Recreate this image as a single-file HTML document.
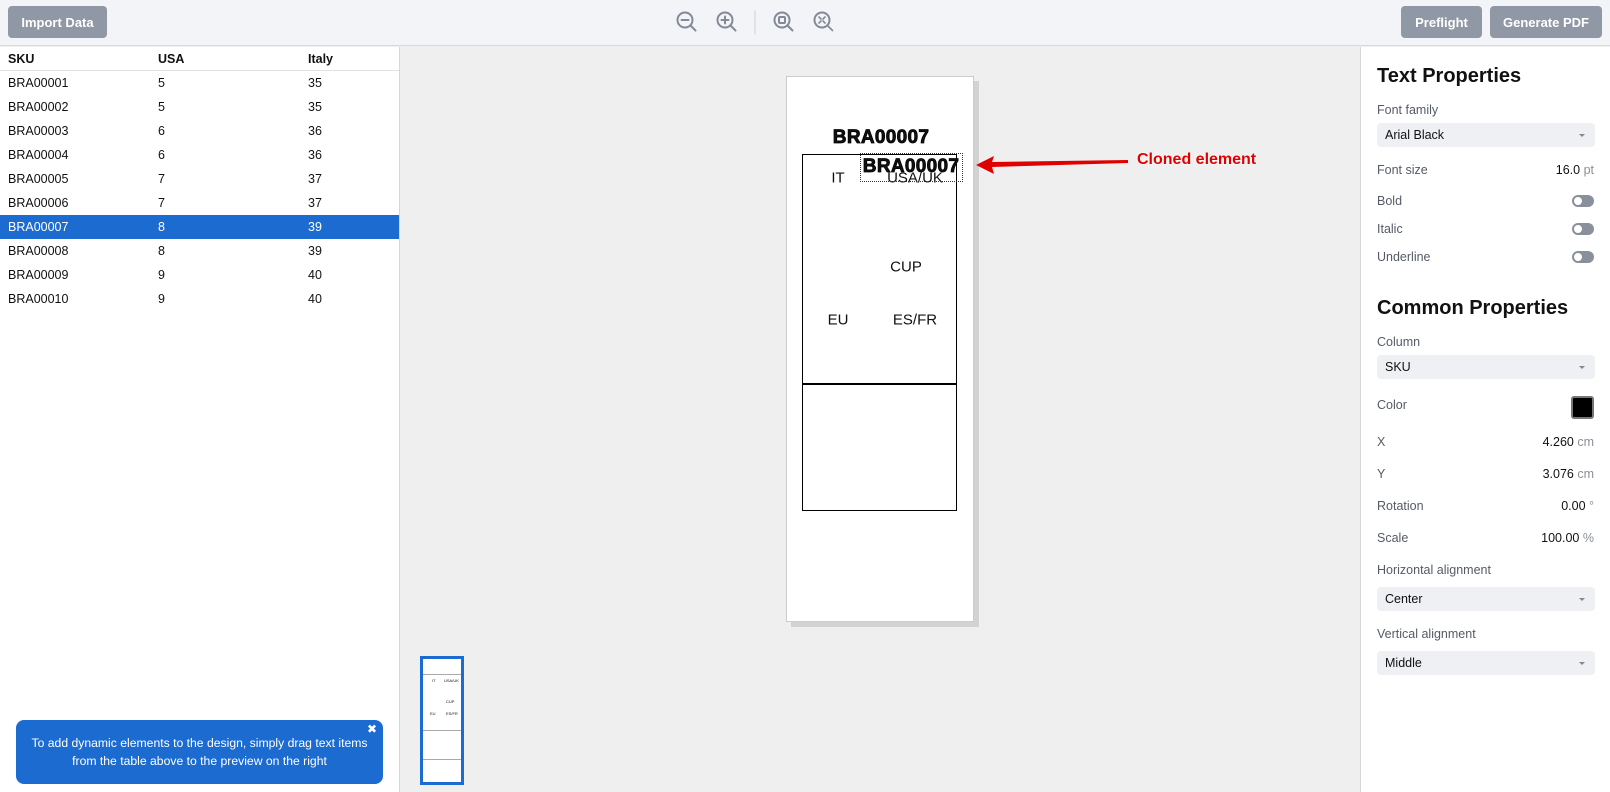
<!DOCTYPE html>
<html><head><meta charset="utf-8"><style>
*{box-sizing:border-box;margin:0;padding:0}
body{width:1610px;height:792px;overflow:hidden;font-family:"Liberation Sans",Arial,sans-serif;background:#efefef;position:relative;color:#111}
.abs{position:absolute}
.top{left:0;top:0;width:1610px;height:46px;background:#f3f4f7;border-bottom:1px solid #d8d9dc}
.btn{position:absolute;top:6px;height:32px;background:#9097a5;color:#fff;font-weight:bold;font-size:13px;border-radius:4px;display:flex;align-items:center;justify-content:center}
.left{left:0;top:47px;width:400px;height:745px;background:#fff;border-right:1px solid #d6d6d6}
.row{position:absolute;left:0;width:399px;height:24px;font-size:12.5px;line-height:24px}
.row span{position:absolute}
.right{left:1360px;top:47px;width:250px;height:745px;background:#fff;border-left:1px solid #d6d6d6}
.h{position:absolute;left:16px;font-size:20px;font-weight:bold;color:#111}
.lbl{position:absolute;left:16px;font-size:12.5px;color:#555b66}
.val{position:absolute;right:16px;font-size:12.5px;color:#111}
.val i{font-style:normal;color:#8a8f99}
.sel{position:absolute;left:16px;width:218px;height:24px;background:#eff0f3;border-radius:4px;font-size:12.5px;line-height:24px;padding-left:8px}
.sel:after{content:"";position:absolute;right:10px;top:11px;border:3px solid transparent;border-top:3px solid #888}
.tog{position:absolute;right:16px;width:22px;height:12px;border-radius:6px;background:#8a8f9c}
.tog:after{content:"";position:absolute;left:2px;top:2px;width:8px;height:8px;border-radius:50%;background:#fff}
.t{position:absolute;font-size:15px;transform:translate(-50%,-50%);white-space:nowrap}
.ab{font-weight:bold;font-size:19px;-webkit-text-stroke:0.8px #000;letter-spacing:0.3px}
</style></head><body>
<div class="abs top">
<div class="btn" style="left:8px;width:99px">Import Data</div>
<div class="btn" style="left:1401px;width:81px">Preflight</div>
<div class="btn" style="left:1490px;width:112px">Generate PDF</div>
<svg class="abs" style="left:672px;top:8px" width="170" height="28" fill="none" stroke="#838997" stroke-width="2" stroke-linecap="round">
<circle cx="13" cy="12" r="7.5"/><path d="M18.5 17.5l5 5M9.5 12h7"/>
<circle cx="53" cy="12" r="7.5"/><path d="M58.5 17.5l5 5M49.5 12h7M53 8.5v7"/>
<path d="M83 3v23" stroke="#cfd1d6" stroke-width="1"/>
<circle cx="110" cy="12" r="7.5"/><path d="M115.5 17.5l5 5"/><rect x="107" y="9" width="6" height="6" rx="1"/>
<circle cx="150" cy="12" r="7.5"/><path d="M155.5 17.5l5 5M147 9l2 2M153 9l-2 2M147 15l2-2M153 15l-2-2" stroke-width="1.6"/>
</svg>
</div>
<div class="abs left">
<div class="row" style="top:0;font-weight:bold;border-bottom:1px solid #e2e2e2"><span style="left:8px">SKU</span><span style="left:158px">USA</span><span style="left:308px">Italy</span></div>
<div class="row" style="top:24px"><span style="left:8px">BRA00001</span><span style="left:158px">5</span><span style="left:308px">35</span></div>
<div class="row" style="top:48px"><span style="left:8px">BRA00002</span><span style="left:158px">5</span><span style="left:308px">35</span></div>
<div class="row" style="top:72px"><span style="left:8px">BRA00003</span><span style="left:158px">6</span><span style="left:308px">36</span></div>
<div class="row" style="top:96px"><span style="left:8px">BRA00004</span><span style="left:158px">6</span><span style="left:308px">36</span></div>
<div class="row" style="top:120px"><span style="left:8px">BRA00005</span><span style="left:158px">7</span><span style="left:308px">37</span></div>
<div class="row" style="top:144px"><span style="left:8px">BRA00006</span><span style="left:158px">7</span><span style="left:308px">37</span></div>
<div class="row" style="top:168px;background:#1b6bd0;color:#fff"><span style="left:8px">BRA00007</span><span style="left:158px">8</span><span style="left:308px">39</span></div>
<div class="row" style="top:192px"><span style="left:8px">BRA00008</span><span style="left:158px">8</span><span style="left:308px">39</span></div>
<div class="row" style="top:216px"><span style="left:8px">BRA00009</span><span style="left:158px">9</span><span style="left:308px">40</span></div>
<div class="row" style="top:240px"><span style="left:8px">BRA00010</span><span style="left:158px">9</span><span style="left:308px">40</span></div>
<div class="abs" style="left:16px;top:673px;width:367px;height:64px;background:#1b6bd0;border-radius:8px;color:#fff;font-size:12.2px;text-align:center;line-height:18px;padding-top:14px">To add dynamic elements to the design, simply drag text items<br>from the table above to the preview on the right<span class="abs" style="right:6px;top:2px;font-size:12px;line-height:14px">✖</span></div>
</div>
<!-- page -->
<div class="abs" style="left:791px;top:81px;width:188px;height:546px;background:#d2d2d2"></div>
<div class="abs" style="left:786px;top:76px;width:188px;height:546px;background:#fff;border:1px solid #ccc"></div>
<div class="abs" style="left:802px;top:154px;width:155px;height:357px;border:1.5px solid #000"></div>
<div class="abs" style="left:802px;top:383px;width:155px;height:1.5px;background:#000"></div>
<div class="t ab" style="left:881px;top:138px">BRA00007</div>
<div class="t" style="left:838px;top:178px">IT</div>
<div class="t" style="left:915px;top:178px">USA/UK</div>
<div class="abs" style="left:860px;top:153px;width:103px;height:29px;border:1px dotted #333"></div>
<div class="t ab" style="left:911px;top:167px">BRA00007</div>
<div class="t" style="left:906px;top:267px">CUP</div>
<div class="t" style="left:838px;top:320px">EU</div>
<div class="t" style="left:915px;top:320px">ES/FR</div>
<svg class="abs" style="left:970px;top:150px" width="170" height="25"><path d="M6 15 L24 6 L22 12 L158 10 L158 13 L22 17 L24 24 Z" fill="#e00000"/></svg>
<div class="abs" style="left:1137px;top:151px;color:#e00000;font-weight:bold;font-size:16px;text-shadow:0 0 2px #fff,0 0 2px #fff">Cloned element</div>
<!-- thumbnail -->
<div class="abs" style="left:420px;top:656px;width:44px;height:129px;border:3px solid #1b6bd0;background:#fff">
<div class="abs" style="left:0;top:15px;width:38px;height:1px;background:#aaa"></div>
<div class="abs" style="left:0;top:71px;width:38px;height:1px;background:#aaa"></div>
<div class="abs" style="left:0;top:100px;width:38px;height:1px;background:#aaa"></div>
<div class="abs" style="left:9px;top:19px;font-size:4px">IT</div><div class="abs" style="left:21px;top:19px;font-size:4px">USA/UK</div>
<div class="abs" style="left:23px;top:40px;font-size:4px">CUP</div>
<div class="abs" style="left:7px;top:52px;font-size:4px">EU</div><div class="abs" style="left:23px;top:52px;font-size:4px">ES/FR</div>
</div>
<div class="abs right">
<div class="h" style="top:18px">Text Properties</div>
<div class="lbl" style="top:56px">Font family</div>
<div class="sel" style="top:76px">Arial Black</div>
<div class="lbl" style="top:116px">Font size</div><div class="val" style="top:116px">16.0 <i>pt</i></div>
<div class="lbl" style="top:147px">Bold</div><div class="tog" style="top:148px"></div>
<div class="lbl" style="top:175px">Italic</div><div class="tog" style="top:176px"></div>
<div class="lbl" style="top:203px">Underline</div><div class="tog" style="top:204px"></div>
<div class="h" style="top:250px">Common Properties</div>
<div class="lbl" style="top:288px">Column</div>
<div class="sel" style="top:308px">SKU</div>
<div class="lbl" style="top:351px">Color</div>
<div class="abs" style="right:16px;top:349px;width:23px;height:23px;background:#000;border:2px solid #777;border-radius:3px"></div>
<div class="lbl" style="top:388px">X</div><div class="val" style="top:388px">4.260 <i>cm</i></div>
<div class="lbl" style="top:420px">Y</div><div class="val" style="top:420px">3.076 <i>cm</i></div>
<div class="lbl" style="top:452px">Rotation</div><div class="val" style="top:452px">0.00 <i>°</i></div>
<div class="lbl" style="top:484px">Scale</div><div class="val" style="top:484px">100.00 <i>%</i></div>
<div class="lbl" style="top:516px">Horizontal alignment</div>
<div class="sel" style="top:540px">Center</div>
<div class="lbl" style="top:580px">Vertical alignment</div>
<div class="sel" style="top:604px">Middle</div>
</div>
</body></html>
